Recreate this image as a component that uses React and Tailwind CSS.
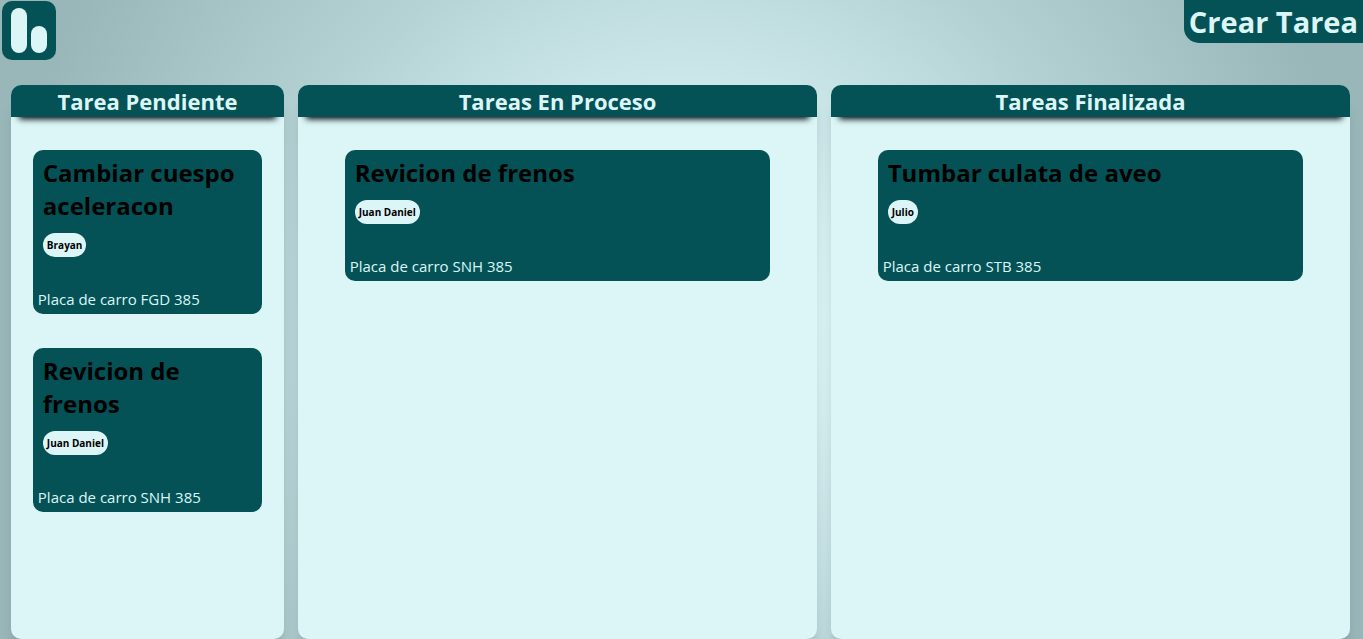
const columns = [
  {
    title: "Tarea Pendiente",
    inset: "px-[8%]",
    tasks: [
      { title: "Cambiar cuespo aceleracon", person: "Brayan", plate: "FGD 385" },
      { title: "Revicion de frenos", person: "Juan Daniel", plate: "SNH 385" },
    ],
  },
  {
    title: "Tareas En Proceso",
    inset: "px-[9%]",
    tasks: [{ title: "Revicion de frenos", person: "Juan Daniel", plate: "SNH 385" }],
  },
  {
    title: "Tareas Finalizada",
    inset: "px-[9%]",
    tasks: [{ title: "Tumbar culata de aveo", person: "Julio", plate: "STB 385" }],
  },
];

function Logo() {
  return (
    <svg viewBox="0 0 54 59" className="mt-px ml-0.5 h-[59px] w-[54px]" role="img" aria-label="Tablero">
      <rect width="54" height="59" rx="10" fill="#045256" />
      <rect x="9" y="7" width="16" height="45" rx="8" fill="#dcf6f8" />
      <rect x="29" y="25" width="16" height="27" rx="8" fill="#dcf6f8" />
    </svg>
  );
}

function Task({ task }) {
  return (
    <article className="rounded-[10px] bg-[#045256] px-[5px] pt-[6px] pb-1">
      <h3 className="px-[5px] text-[24px] leading-[33px] font-bold text-black">{task.title}</h3>
      <p className="mx-[5px] mt-[11px] w-fit rounded-xl bg-[#dcf6f8] px-1 text-[10px] leading-6 font-bold text-black">
        {task.person}
      </p>
      <p className="mt-8 text-[15px] leading-[21px] text-[#dcf6f8]">Placa de carro {task.plate}</p>
    </article>
  );
}

function Column({ column }) {
  return (
    <section className="rounded-[10px] bg-[#dcf6f8] shadow-[0_20px_15px_-5px_rgba(0,0,0,0.2)]">
      <h2 className="rounded-t-[10px] bg-[#045256] pt-px pb-px text-center text-[22px] leading-[30px] font-bold text-[#dcf6f8] shadow-[0_10px_6px_-8px_black]">
        {column.title}
      </h2>
      <div className={`flex flex-col gap-[34px] pt-[33px] pb-8 ${column.inset}`}>
        {column.tasks.map((task) => (
          <Task key={task.title} task={task} />
        ))}
      </div>
    </section>
  );
}

export default function App() {
  return (
    <div className="flex min-h-screen flex-col bg-[radial-gradient(circle,#dcf6f8_15%,#b4d2d4_55%,#99b7b9_90%)] font-['Open_Sans','Noto_Sans',sans-serif]">
      <header className="flex items-start justify-between pb-[25px]">
        <Logo />
        <button
          type="button"
          className="rounded-bl-[15px] bg-[#045256] px-[5px] pt-0.5 pb-px text-[29px] leading-10 font-bold text-[#dcf6f8]"
        >
          Crear Tarea
        </button>
      </header>
      <main className="grid grow grid-cols-[273fr_519fr_519fr] gap-3.5 pr-[13px] pl-[11px]">
        {columns.map((column) => (
          <Column key={column.title} column={column} />
        ))}
      </main>
    </div>
  );
}
